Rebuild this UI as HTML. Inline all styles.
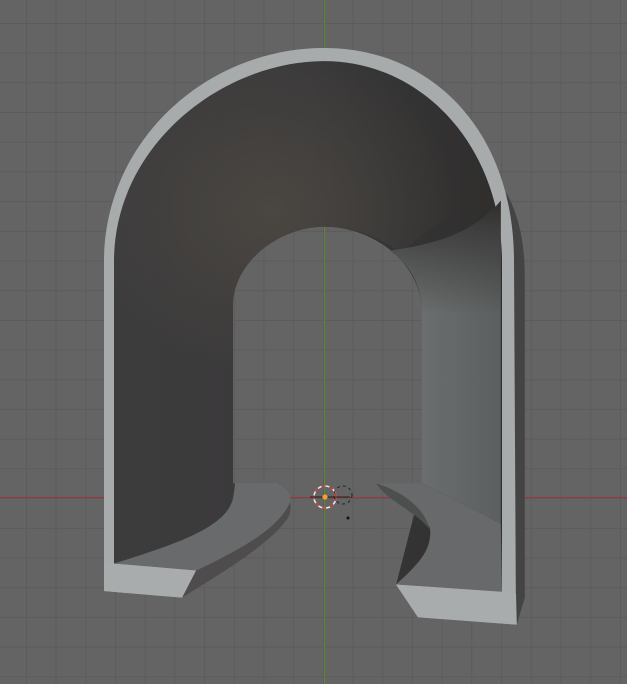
<!DOCTYPE html>
<html><head><style>html,body{margin:0;padding:0;background:#646464;overflow:hidden}svg{display:block}</style></head>
<body>
<svg width="627" height="684" viewBox="0 0 627 684" xmlns="http://www.w3.org/2000/svg">
<defs>
<pattern id="g" x="26" y="23" width="29.7" height="29.7" patternUnits="userSpaceOnUse">
<rect width="29.7" height="29.7" fill="#646464"/>
<path d="M0 0V29.7M0 0H29.7" stroke="#595959" stroke-width="1.4" fill="none"/>
</pattern>
<linearGradient id="wall" x1="0" y1="0" x2="1" y2="0">
<stop offset="0" stop-color="#3d3c3d"/><stop offset="0.5" stop-color="#3a393a"/><stop offset="1" stop-color="#2f2e2d"/>
</linearGradient>
<radialGradient id="ceil" cx="0.42" cy="0.45" r="0.5">
<stop offset="0" stop-color="#4a4641"/><stop offset="1" stop-color="#4a4641" stop-opacity="0"/>
</radialGradient>
<linearGradient id="rw" x1="0" y1="0" x2="1" y2="0">
<stop offset="0" stop-color="#717474"/><stop offset="1" stop-color="#5c5f5f"/>
</linearGradient>
<linearGradient id="rwv" x1="0" y1="0" x2="0" y2="1">
<stop offset="0" stop-color="#2f2e2d"/><stop offset="0.25" stop-color="#2f2e2d" stop-opacity="0.7"/><stop offset="1" stop-color="#2f2e2d" stop-opacity="0"/>
</linearGradient>
</defs>
<rect width="627" height="684" fill="url(#g)"/>
<line x1="0" y1="497.5" x2="627" y2="497.5" stroke="#a0343a" stroke-width="1"/>
<line x1="324.5" y1="0" x2="324.5" y2="684" stroke="#5c8a2a" stroke-width="1"/>
<g transform="scale(0.4,0.4362)">
<path d="M1265,440 C1300,500 1312,560 1312,640 L1312,1370 L1292,1432 L1285,1360 L1285,600 Z" fill="#444445"/>
<path fill-rule="evenodd" fill="#a8abac" d="M260,1355 L260,600 C260,320 520,110 810,110 C1080,110 1285,300 1285,600 L1290,1432 L1045,1415 L990,1340 L1055,1108 L1055,720 C1055,600 930,520 810,520 C700,520 583,600 583,700 L583,1108 L685,1108 C710,1115 728,1135 725,1150 L718,1190 L455,1370 Z"/>
<path fill-rule="evenodd" fill="url(#wall)" d="M285,1292 L285,600 C285,330 560,140 810,140 C1060,140 1255,340 1255,600 L1255,1355 L990,1340 L1055,1108 L1055,720 C1055,600 930,520 810,520 C700,520 583,600 583,700 L583,1108 L685,1108 L725,1150 L490,1308 Z"/>
<path fill="url(#ceil)" d="M285,600 C285,330 560,140 810,140 C1060,140 1200,300 1220,420 L1000,580 C930,530 860,520 810,520 C700,520 583,600 583,700 L583,900 L285,900 Z"/>
<path fill="url(#rw)" d="M975,575 C1030,610 1055,660 1055,720 L1055,1108 L1252,1200 L1252,460 C1180,540 1080,560 975,575 Z"/>
<path fill="url(#rwv)" d="M975,575 C1030,610 1055,660 1055,720 L1252,720 L1252,460 C1180,540 1080,560 975,575 Z"/>
<path fill="#696a6c" d="M588,1108 L685,1108 C710,1115 728,1135 725,1150 C700,1210 600,1260 490,1308 L285,1292 C430,1250 570,1210 583,1140 Z"/>
<path fill="#4e4c4c" d="M490,1308 C600,1260 700,1210 725,1150 C728,1165 726,1178 718,1190 C670,1250 560,1310 455,1370 Z"/>
<path fill="#a9acad" d="M260,1288 L285,1292 L490,1308 L455,1370 L260,1355 Z"/>
<path fill="#67696a" d="M940,1108 L1055,1108 L1252,1200 L1255,1357 L990,1340 C1050,1290 1080,1260 1075,1210 C1050,1170 990,1140 940,1108 Z"/>
<path fill="#4d4f4f" d="M940,1108 C1000,1125 1060,1160 1075,1215 C1040,1172 970,1150 940,1108 Z"/>
<path fill="#a9acad" d="M990,1340 L1255,1357 L1290,1360 L1292,1432 L1045,1415 Z"/>
</g>
<circle cx="325" cy="497" r="11" fill="none" stroke="#e8e8e8" stroke-width="1.6"/>
<circle cx="325" cy="497" r="11" fill="none" stroke="#d03030" stroke-width="1.6" stroke-dasharray="4 4"/>
<circle cx="343" cy="495" r="9" fill="none" stroke="#222" stroke-width="1" stroke-dasharray="3 3"/>
<line x1="310" y1="497" x2="350" y2="497" stroke="#222" stroke-width="1"/>
<circle cx="325" cy="497" r="2.6" fill="#f0a030"/>
<circle cx="348" cy="518" r="1.5" fill="#111"/>
</svg>
</body></html>
